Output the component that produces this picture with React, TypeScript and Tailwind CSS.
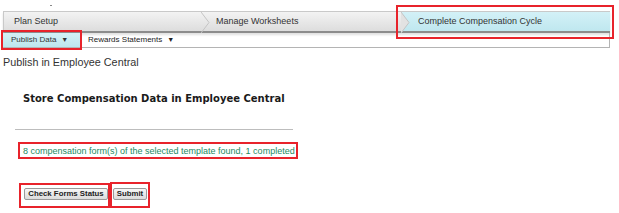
import React from 'react'

function Chevron({ over }: { over?: boolean }) {
  return (
    <svg width="10" height="21" viewBox="0 0 10 21" className="absolute left-0 top-0">
      {over && <polygon points="0,0 8,10.5 0,21" fill="#e2e2e2" />}
      <polyline points="0,0 8,10.5 0,21" fill="none" stroke="#c4c4c4" strokeWidth="1" />
    </svg>
  )
}

function Marker({ className }: { className: string }) {
  return <div className={`absolute border-2 border-[#e8232b] pointer-events-none ${className}`} />
}

export default function App() {
  return (
    <div className="relative w-[619px] h-[213px] bg-white overflow-hidden font-['Liberation_Sans',Arial,sans-serif] text-[#333]">
      <div className="h-[11px] relative">
        <span className="absolute left-[50px] top-[5px] w-[2px] h-[1px] bg-[#888]" />
      </div>

      <div className="ml-[3px] w-[607px]">
        {/* workflow steps */}
        <div className="flex h-[22px] border-t border-l border-[#c9c9c9] border-b-2 border-b-[#8c8c8c] shadow-[0_2px_2px_rgba(0,0,0,0.12)] text-[9px]">
          <div className="w-[197px] flex items-center pl-[10px] bg-gradient-to-b from-[#f3f3f3] to-[#dddddd]">Plan Setup</div>
          <div className="relative w-[200px] flex items-center pl-[15px] bg-gradient-to-b from-[#f3f3f3] to-[#dddddd]">
            <Chevron />
            Manage Worksheets
          </div>
          <div className="relative flex-1 flex items-center pl-[17px] bg-gradient-to-b from-[#d3f1f7] to-[#bfe7ef]">
            <Chevron over />
            Complete Compensation Cycle
          </div>
        </div>

        {/* sub navigation */}
        <div className="flex h-[15px] border-b border-r border-[#b4b4b4] text-[8px]">
          <div className="w-[77px] flex items-center pl-[8px] gap-[5px] bg-gradient-to-b from-[#d4f1f6] to-[#bde6ee] text-[#333]">
            Publish Data <span className="text-[7px]">&#9660;</span>
          </div>
          <div className="flex items-center pl-[8px] gap-[5px] text-[#222]">
            Rewards Statements <span className="text-[7px]">&#9660;</span>
          </div>
        </div>
      </div>

      <p className="mt-[8px] ml-[3px] text-[10.8px] leading-[13px] text-[#333]">Publish in Employee Central</p>

      <h2 className="mt-[23px] ml-[23px] text-[10px] leading-[13px] font-bold text-[#1a1a1a] font-['DejaVu_Sans',sans-serif]">
        Store Compensation Data in Employee Central
      </h2>

      <div className="mt-[24px] ml-[15px] w-[278px] h-px bg-[#bdbdbd]" />

      <p className="mt-[16px] ml-[23px] text-[9px] leading-[11px] text-[#238a62]">
        8 compensation form(s) of the selected template found, 1 completed
      </p>

      <div className="mt-[31px] ml-[24px] flex gap-[5px] text-[7.8px] font-bold text-[#222]">
        <button className="h-[12px] w-[84px] flex items-center justify-center border border-[#9a9a9a] rounded-[2px] bg-gradient-to-b from-[#f7f7f7] to-[#dcdcdc] leading-none">
          Check Forms Status
        </button>
        <button className="h-[12px] w-[34px] flex items-center justify-center border border-[#9a9a9a] rounded-[2px] bg-gradient-to-b from-[#f7f7f7] to-[#dcdcdc] leading-none">
          Submit
        </button>
      </div>

      <Marker className="left-[396px] top-[5px] w-[218px] h-[34px]" />
      <Marker className="left-[1px] top-[30px] w-[81px] h-[20px]" />
      <Marker className="left-[18px] top-[142px] w-[280px] h-[17px]" />
      <Marker className="left-[19px] top-[183px] w-[91px] h-[25px]" />
      <Marker className="left-[110px] top-[182px] w-[40px] h-[26px]" />
    </div>
  )
}
